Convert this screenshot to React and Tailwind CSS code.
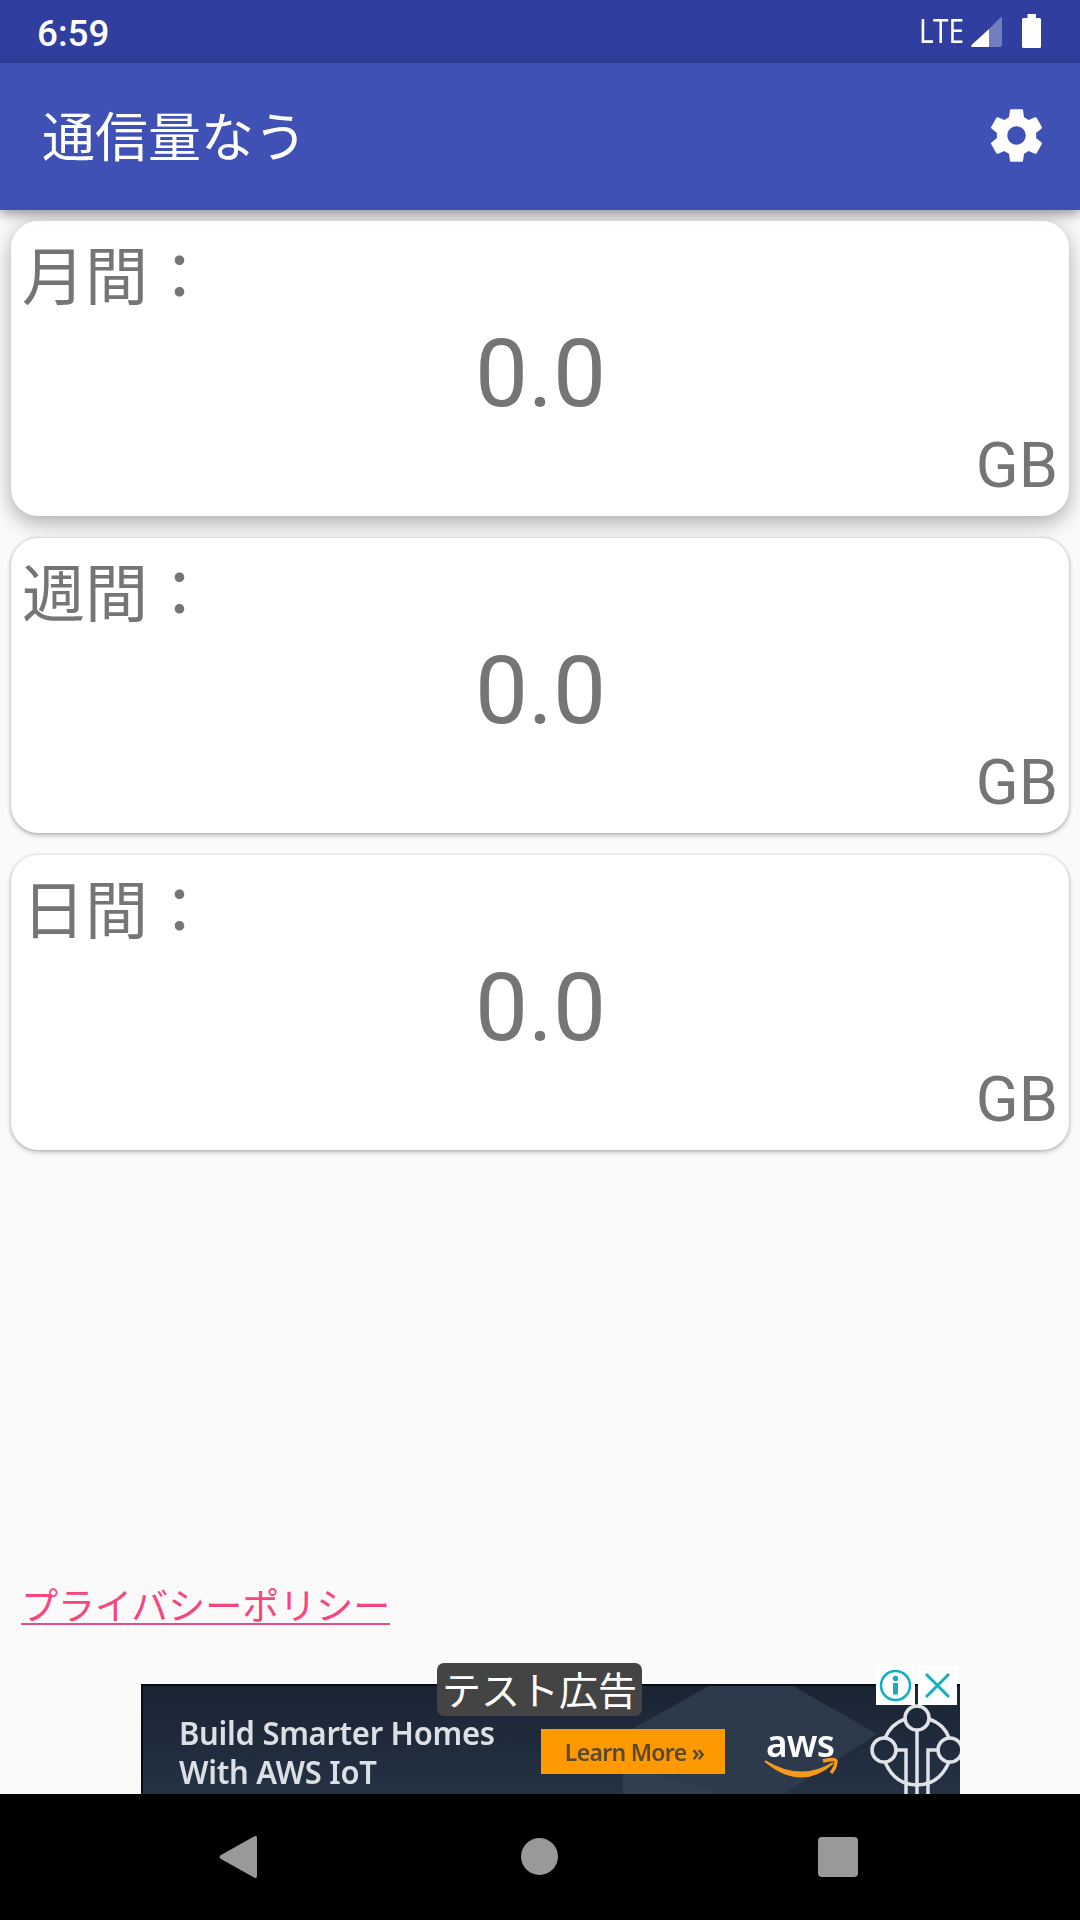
import React from "react";

const JP = "font-['Roboto','Noto_Sans_CJK_JP',sans-serif]";

function StatusBar() {
  return (
    <div className="flex h-[63px] shrink-0 items-center justify-between bg-[#303f9f] pr-[39px] pl-[37px] text-white">
      <span className="mt-[5px] text-[36.75px] leading-[40px] font-medium">6:59</span>
      <div className="flex items-center">
        <span className="mb-[1px] w-[52px] origin-left scale-x-[0.87] font-['Noto_Sans',sans-serif] text-[32px] leading-[40px]">LTE</span>
        <svg className="h-[32px] w-[32px]" viewBox="0 0 32 32">
          <path d="M31 2.5 V29 Q31 31 29 31 H18 V13 L29 2 Q31 0 31 2.5Z" fill="#fff" opacity="0.32" />
          <path d="M18 13 V31 H1.5 Q-.5 31 .5 29 Z" fill="#fff" />
        </svg>
        <svg className="mb-[1px] ml-[19px] h-[34px] w-[19px]" viewBox="0 0 19 34">
          <path d="M5.5 0H14V4H17.5Q19 4 19 5.500V32.500Q19 34 17.500 34H1.500Q0 34 0 32.500V5.500Q0 4 1.500 4H5.500Z" fill="#fff" />
        </svg>
      </div>
    </div>
  );
}

function AppBar() {
  return (
    <header className="flex h-[147px] shrink-0 items-center justify-between bg-[#3f51b5] pr-[32px] pl-[42px] text-white shadow-[0_4px_12px_rgba(0,0,0,0.42)]">
      <h1 className="mt-[4px] text-[53px] leading-[62px]">通信量なう</h1>
      <svg className="mb-[2px] h-[63px] w-[63px]" viewBox="0 0 24 24" fill="#fff">
        <path d="M19.430 12.980c.04-.32.07-.64.07-.98s-.03-.66-.07-.98l2.110-1.650c.19-.15.24-.42.12-.64l-2-3.460c-.12-.22-.39-.3-.61-.22l-2.490 1c-.52-.4-1.080-.73-1.690-.98l-.38-2.650A.488.488 0 0 0 14 2h-4c-.25 0-.46.18-.49.42l-.38 2.650c-.61.25-1.170.59-1.690.98l-2.490-1c-.23-.09-.49 0-.61.22l-2 3.460c-.13.22-.07.49.12.64l2.110 1.650c-.04.32-.07.65-.07.98s.03.66.07.98l-2.110 1.650c-.19.15-.24.42-.12.64l2 3.460c.12.22.39.3.61.22l2.490-1c.52.4 1.080.73 1.690.98l.38 2.650c.03.24.24.42.49.42h4c.25 0 .46-.18.49-.42l.38-2.650c.61-.25 1.170-.59 1.690-.98l2.490 1c.23.09.49 0 .61-.22l2-3.460c.12-.22.07-.49-.12-.64l-2.110-1.650zM12 15.500c-1.930 0-3.500-1.570-3.500-3.500s1.570-3.500 3.500-3.500 3.500 1.570 3.500 3.500-1.570 3.500-3.500 3.500z" />
      </svg>
    </header>
  );
}

const cards = [
  { label: "月間：", shadow: "shadow-[0_9px_22px_rgba(0,0,0,0.24),0_0_16px_rgba(0,0,0,0.10)]" },
  { label: "週間：", shadow: "shadow-[0_2px_5px_rgba(0,0,0,0.28),0_0_3px_rgba(0,0,0,0.16)]" },
  { label: "日間：", shadow: "shadow-[0_2px_5px_rgba(0,0,0,0.28),0_0_3px_rgba(0,0,0,0.10)]" },
];

function UsageCard({ label, shadow }) {
  return (
    <section className={`flex h-[295px] flex-col rounded-[27px] bg-white px-[11px] text-[#757575] ${shadow}`}>
      <div className="mt-[11px] h-[87px] text-[63px] leading-[91px]">{label}</div>
      <div className="h-[110px] pl-[1px] text-center text-[94.5px] leading-[110px]">0.0</div>
      <div className="h-[74px] text-right text-[63px] leading-[74px]">GB</div>
    </section>
  );
}

function AdArt() {
  return (
    <svg className="absolute inset-0 h-[110px] w-[819px] overflow-hidden" viewBox="0 0 819 110">
      <defs>
        <linearGradient id="adSky" x1="0" y1="0" x2="0" y2="1">
          <stop offset="0" stopColor="#1a2433" />
          <stop offset="1" stopColor="#243244" />
        </linearGradient>
      </defs>
      <rect width="819" height="110" fill="url(#adSky)" />
      <path d="M568 2H652L736 50L643 110H482V50Z" fill="#2d3a4b" />
      <path d="M482 80L580 110H482Z" fill="#313e50" />
      <path d="M1 110V1H819" fill="none" stroke="#070c14" strokeWidth="2" />
      <g className="blur-[0.6px]">
        <path d="M624 77 Q660 99 692 79 Q660 107 624 77Z" fill="#f79a1c" stroke="#f79a1c" strokeWidth="2" />
        <path d="M682 77 Q693 74 695 77 Q695 83 690 89" fill="none" stroke="#f79a1c" strokeWidth="3.500" />
        <g fill="none" stroke="#dfe2e6" strokeWidth="3.500">
          <circle cx="776" cy="34" r="12" />
          <circle cx="743" cy="66" r="12" />
          <circle cx="809" cy="66" r="12" />
          <path d="M764 35 Q750 40 744 54M788 35 Q803 40 808 54M744 78 Q754 101 776 101 Q798 101 808 78" />
          <path d="M755 66H765V112M797 66H787V112M776 46V112" />
        </g>
      </g>
    </svg>
  );
}

function AdBanner() {
  return (
    <aside className="relative ml-[141px] h-[110px] w-[819px] shrink-0">
      <AdArt />
      <div className="relative flex h-full font-['Noto_Sans',sans-serif] blur-[0.7px]">
        <p className="mt-[29px] ml-[38px] w-[362px] origin-left scale-x-[0.968] text-[32px] leading-[39px] font-semibold tracking-[-0.3px] whitespace-pre-line text-[#dce0e4]">
          {"Build Smarter Homes\nWith AWS IoT"}
        </p>
        <div className="mt-[45px] h-[45px] w-[184px] bg-[#ff9900] pl-[3px] text-center text-[23px] leading-[46px] font-semibold tracking-[-0.7px] text-[#5a4a2c]">
          Learn More »
        </div>
        <span className="mt-[36px] ml-[41px] text-[37px] leading-[46px] font-semibold tracking-[-0.8px] text-white">aws</span>
      </div>
      <div className="absolute -top-[21px] left-[296px] h-[53px] w-[205px] rounded-[7px] bg-[#444] text-center text-[39px] leading-[58px] whitespace-nowrap text-white">
        テスト広告
      </div>
      <div className="absolute -top-[19px] left-[735px] flex gap-[3px]">
        <svg className="h-[40px] w-[39px] bg-white" viewBox="0 0 39 40">
          <circle cx="19.500" cy="20.500" r="14.500" fill="none" stroke="#13aebf" strokeWidth="2.500" />
          <circle cx="19.500" cy="13.500" r="2.700" fill="#13aebf" />
          <rect x="17" y="18" width="5" height="11.500" fill="#13aebf" />
        </svg>
        <svg className="h-[40px] w-[39px] bg-white" viewBox="0 0 39 40">
          <path d="M8 9L31 32M31 9L8 32" stroke="#13aebf" strokeWidth="3" />
        </svg>
      </div>
    </aside>
  );
}

function NavBar() {
  return (
    <nav className="relative flex h-[126px] shrink-0 items-center bg-black pb-[1px] pl-[219px]">
      <svg className="h-[44px] w-[39px]" viewBox="0 0 39 44">
        <path d="M35 1.500Q38 0 38 3V41Q38 44 35 42.500L2 24Q-1 22 2 20Z" fill="#999" />
      </svg>
      <div className="ml-[263px] h-[37px] w-[37px] rounded-full bg-[#999]" />
      <div className="ml-[260px] h-[40px] w-[40px] rounded-[4px] bg-[#999]" />
    </nav>
  );
}

export default function App() {
  return (
    <div className={`flex h-[1920px] w-[1080px] flex-col overflow-hidden bg-[#fafafa] ${JP}`} lang="ja">
      <StatusBar />
      <AppBar />
      <main className="flex grow flex-col">
        <div className="flex flex-col gap-[22px] px-[11px] pt-[11px]">
          {cards.map((card) => (
            <UsageCard key={card.label} {...card} />
          ))}
        </div>
        <a className="mt-auto mb-[49px] ml-[21px] h-[44px] w-[369px] border-b-2 border-[#e0508a] text-[37px] leading-[53px] whitespace-nowrap text-[#f7467f]">
          プライバシーポリシー
        </a>
        <div className="mt-[10px] flex">
          <AdBanner />
        </div>
      </main>
      <NavBar />
    </div>
  );
}
